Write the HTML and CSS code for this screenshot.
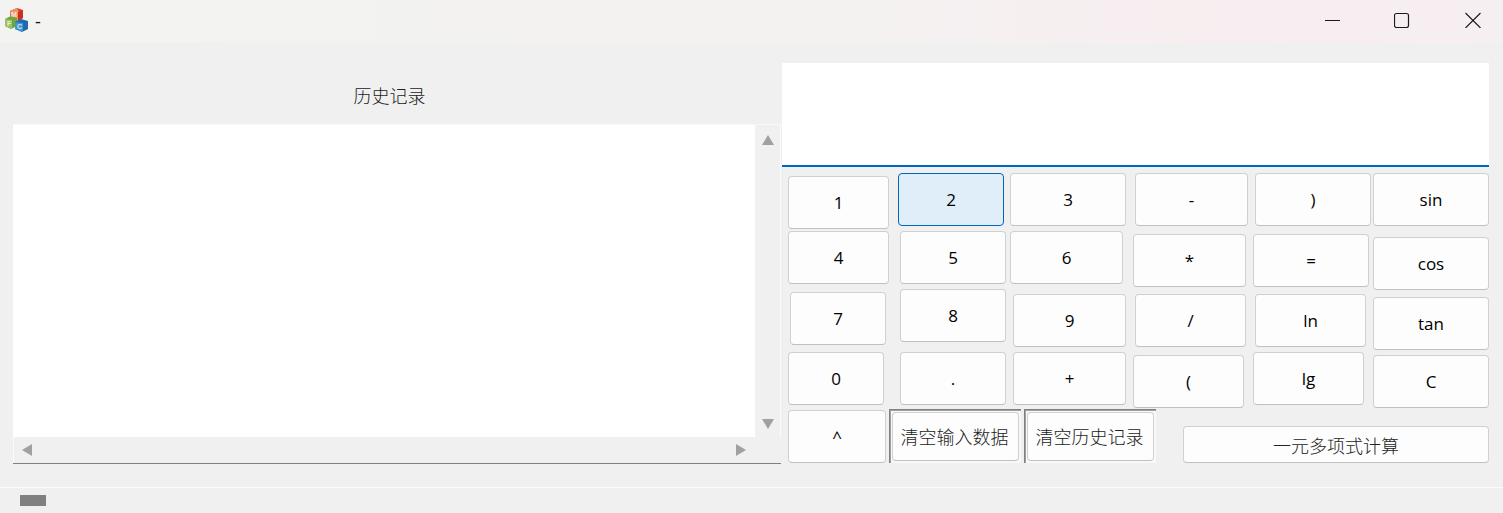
FILE: index.html
```html
<!DOCTYPE html>
<html lang="zh-CN">
<head>
<meta charset="utf-8">
<title>-</title>
<link rel="stylesheet" href="styles.css">
</head>
<body>
<div class="window">
  <header class="titlebar">
    <svg class="appicon" width="24" height="24" viewBox="0 0 24 24">
      <polygon points="6,3 13,0 19,2 19,10 13,13 6,11" fill="#d2402a"/>
      <polygon points="6,3 13,0 15,4 14,13 7,12" fill="#ee9468"/>
      <polygon points="14,4 19,2 19,10 14,13" fill="#c8301f"/>
      <polygon points="1,11 7,8 13,10 13,18 7,21 1,18" fill="#6ea53c"/>
      <polygon points="1,11 8,12 8,21 1,18" fill="#9ac25e"/>
      <polygon points="11,14 17,11 24,13 24,21 18,24 11,21" fill="#1f6aa8"/>
      <polygon points="11,14 19,15 19,24 11,21" fill="#3f95d2"/>
      <text class="icon-letter" x="7" y="9">M</text>
      <text class="icon-letter" x="3" y="18">F</text>
      <text class="icon-letter" x="13" y="21">C</text>
    </svg>
    <span class="wintitle">-</span>
    <div class="wincontrols">
      <svg class="ctl ctl-min" width="16" height="16" viewBox="0 0 16 16"><path d="M1 8.5H16" stroke="#1a1a1a" fill="none"/></svg>
      <svg class="ctl ctl-max" width="16" height="16" viewBox="0 0 16 16"><rect x="0.5" y="1.5" width="14" height="14" rx="2" stroke="#1a1a1a" stroke-width="1.2" fill="none"/></svg>
      <svg class="ctl ctl-close" width="16" height="16" viewBox="0 0 16 16"><path d="M0.5 1L15.5 16M15.5 1L0.5 16" stroke="#1a1a1a" stroke-width="1.1" fill="none"/></svg>
    </div>
  </header>

  <main class="content">
    <section class="history">
      <div class="history-label">历史记录</div>
      <div class="listbox">
        <div class="listbox-top">
          <div class="list-area"></div>
          <div class="vscroll">
            <svg width="12" height="10" viewBox="0 0 12 10"><polygon points="6,0 12,10 0,10" fill="#a0a0a0"/></svg>
            <svg width="12" height="10" viewBox="0 0 12 10"><polygon points="0,0 12,0 6,10" fill="#a0a0a0"/></svg>
          </div>
        </div>
        <div class="hscroll">
          <svg width="10" height="12" viewBox="0 0 10 12"><polygon points="10,0 10,12 0,6" fill="#a0a0a0"/></svg>
          <svg width="10" height="12" viewBox="0 0 10 12"><polygon points="0,0 10,6 0,12" fill="#a0a0a0"/></svg>
        </div>
      </div>
    </section>

    <section class="calc">
      <div class="display"></div>
      <div class="keypad">
        <div class="keycols">
          <div class="col col1">
            <button class="key w101 t3">1</button>
            <button class="key w101 t2">4</button>
            <button class="key w96 t8 l2">7</button>
            <button class="key w96 t7">0</button>
          </div>
          <div class="col col2">
            <button class="key key-active w106">2</button>
            <button class="key w106 t5 l2">5</button>
            <button class="key w106 t5 l2">8</button>
            <button class="key w106 t10 l2">.</button>
          </div>
          <div class="col col3">
            <button class="key w116">3</button>
            <button class="key w113 t5">6</button>
            <button class="key w113 t10 l3">9</button>
            <button class="key w113 t5 l3">+</button>
          </div>
          <div class="col col4">
            <button class="key w113 l2">-</button>
            <button class="key w113 t8">*</button>
            <button class="key w111 t7 l2">/</button>
            <button class="key w111 t8">(</button>
          </div>
          <div class="col col5">
            <button class="key w116 l2">)</button>
            <button class="key w116 t8">=</button>
            <button class="key w111 t7 l2">ln</button>
            <button class="key w111 t5">lg</button>
          </div>
          <div class="col col6">
            <button class="key w116">sin</button>
            <button class="key w116 t11">cos</button>
            <button class="key w116 t7">tan</button>
            <button class="key w116 t5">C</button>
          </div>
        </div>
        <div class="keyrow">
          <button class="key w98">^</button>
          <div class="framed"><button class="cjk-key">清空输入数据</button></div>
          <div class="framed"><button class="cjk-key">清空历史记录</button></div>
          <button class="poly-key">一元多项式计算</button>
        </div>
      </div>
    </section>
  </main>

  <footer class="statusbar"><div class="status-block"></div></footer>
</div>
</body>
</html>
```
FILE: styles.css
```css
* { box-sizing: border-box; }
html, body { margin: 0; padding: 0; }
body {
  width: 1503px;
  height: 513px;
  overflow: hidden;
  background: #f0f0f0;
  font-family: "Liberation Serif", "Noto Sans CJK SC", serif;
}
.window { display: flex; flex-direction: column; height: 513px; }

.titlebar {
  height: 43px;
  flex: none;
  display: flex;
  align-items: center;
  background: linear-gradient(90deg, #f3f3f2 0%, #f3f2f1 50%, #f8edf0 85%, #f6eff2 100%);
}
.appicon { margin: 0 0 3px 4px; flex: none; }
.icon-letter { font: 700 7px "Liberation Sans", sans-serif; fill: #ffffff; opacity: 0.75; }
.wintitle { margin: 0 0 2px 7px; font: 18px "Open Sans", sans-serif; color: #111; line-height: 1; }
.wincontrols { margin-left: auto; display: flex; align-items: center; padding: 0 22px 3px 0; height: 43px; }
.ctl { display: block; flex: none; }
.ctl-min { margin-right: 54px; }
.ctl-max { margin-right: 55px; }

.content { flex: 1; display: flex; min-height: 0; }

.history { width: 781px; flex: none; padding: 20px 0 0 13px; }
.history-label {
  height: 61px;
  width: 755px;
  padding: 3px 2px 0 0;
  display: flex;
  align-items: center;
  justify-content: center;
  font-size: 18px;
  font-weight: 300;
  color: #222;
}
.listbox {
  width: 768px;
  height: 340px;
  display: flex;
  flex-direction: column;
  border-bottom: 1px solid #808080;
  border-top: 1px solid #f8f8f8;
}
.listbox-top { flex: 1; display: flex; min-height: 0; }
.list-area { flex: 1; background: #ffffff; }
.vscroll {
  width: 26px;
  flex: none;
  display: flex;
  flex-direction: column;
  align-items: center;
  justify-content: space-between;
  padding: 10px 0 8px;
  border-right: 1px solid #fafafa;
}
.hscroll {
  height: 26px;
  flex: none;
  display: flex;
  align-items: center;
  justify-content: space-between;
  padding: 0 35px 0 8px;
  border-left: 1px solid #fafafa;
}

.calc { flex: 1; padding: 20px 14px 0 1px; }
.display {
  height: 104px;
  background: #ffffff;
  border-bottom: 2px solid #0067c0;
}
.keypad { padding: 6px 0 0 6px; }
.keycols { display: flex; }
.col { display: flex; flex-direction: column; align-items: flex-start; flex: none; }
.col1 { width: 110px; }
.col2 { width: 112px; }
.col3 { width: 123px; }
.col4 { width: 120px; }
.col5 { width: 120px; }
.col6 { width: 116px; }

.key {
  display: block;
  flex: none;
  height: 53px;
  padding: 0;
  background: #fdfdfd;
  border: 1px solid #d0d0d0;
  border-bottom-color: #c0c0c0;
  border-radius: 4px;
  font: 500 17px "Open Sans", sans-serif;
  color: #000;
}
.key-active { background: #e0eef9; border-color: #0067c0; }
.w96 { width: 96px; }
.w98 { width: 98px; }
.w101 { width: 101px; }
.w106 { width: 106px; }
.w111 { width: 111px; }
.w113 { width: 113px; }
.w116 { width: 116px; }
.t2 { margin-top: 2px; }
.t3 { margin-top: 3px; }
.t5 { margin-top: 5px; }
.t7 { margin-top: 7px; }
.t8 { margin-top: 8px; }
.t10 { margin-top: 10px; }
.t11 { margin-top: 11px; }
.l2 { margin-left: 2px; }
.l3 { margin-left: 3px; }

.keyrow { display: flex; align-items: flex-end; height: 53px; margin-top: 2px; }
.framed {
  width: 132px;
  height: 54px;
  flex: none;
  margin-left: 3px;
  padding: 2px;
  border-top: 1px solid #808080;
  border-left: 1px solid #808080;
  box-shadow: inset 1px 1px 0 #a0a0a0;
  background: #f8f8f8;
}
.cjk-key, .poly-key {
  display: block;
  background: #fdfdfd;
  border: 1px solid #d0d0d0;
  border-bottom-color: #c0c0c0;
  border-radius: 4px;
  font-family: "Liberation Serif", "Noto Sans CJK SC", serif;
  font-size: 18px;
  font-weight: 300;
  color: #222;
}
.cjk-key { width: 127px; height: 49px; padding: 0 2px 2px 0; }
.poly-key { width: 306px; height: 37px; padding: 0; margin-left: 27px; flex: none; }

.statusbar {
  height: 26px;
  flex: none;
  border-top: 1px solid #fbfbfb;
  padding: 7px 0 0 20px;
}
.status-block { width: 26px; height: 11px; background: #808080; }
```
